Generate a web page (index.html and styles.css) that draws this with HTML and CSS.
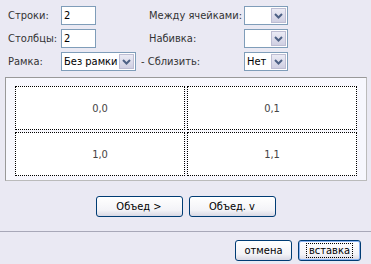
FILE: index.html
```html
<!DOCTYPE html>
<html lang="ru">
<head>
  <meta charset="UTF-8">
  <title>Вставка таблицы</title>
  <link rel="stylesheet" href="styles.css">
</head>
<body>
  <div class="dialog">
    <!-- параметры таблицы -->
    <div class="options">
      <div class="row">
        <span class="label">Строки:</span>
        <input class="num" type="text" value="2">
        <span class="label-right">Между ячейками:</span>
        <div class="combo small">
          <span class="combo-text"></span>
          <span class="combo-btn"><svg width="9" height="6" viewBox="0 0 9 6"><path d="M1 1 L4.5 4.5 L8 1" fill="none" stroke="#4d6185" stroke-width="2"/></svg></span>
        </div>
      </div>
      <div class="row">
        <span class="label">Столбцы:</span>
        <input class="num" type="text" value="2">
        <span class="label-right">Набивка:</span>
        <div class="combo small">
          <span class="combo-text"></span>
          <span class="combo-btn"><svg width="9" height="6" viewBox="0 0 9 6"><path d="M1 1 L4.5 4.5 L8 1" fill="none" stroke="#4d6185" stroke-width="2"/></svg></span>
        </div>
      </div>
      <div class="row">
        <span class="label">Рамка:</span>
        <div class="combo wide">
          <span class="combo-text">Без рамки</span>
          <span class="combo-btn"><svg width="9" height="6" viewBox="0 0 9 6"><path d="M1 1 L4.5 4.5 L8 1" fill="none" stroke="#4d6185" stroke-width="2"/></svg></span>
        </div>
        <span class="label-join">- Сблизить:</span>
        <div class="combo small">
          <span class="combo-text">Нет</span>
          <span class="combo-btn"><svg width="9" height="6" viewBox="0 0 9 6"><path d="M1 1 L4.5 4.5 L8 1" fill="none" stroke="#4d6185" stroke-width="2"/></svg></span>
        </div>
      </div>
    </div>

    <!-- предпросмотр -->
    <div class="preview">
      <table class="grid">
        <tr><td>0,0</td><td>0,1</td></tr>
        <tr><td>1,0</td><td>1,1</td></tr>
      </table>
    </div>

    <div class="merge">
      <button class="btn merge-btn">Объед &gt;</button>
      <button class="btn merge-btn">Объед. v</button>
    </div>

    <div class="footer">
      <button class="btn">отмена</button>
      <button class="btn default"><span class="focus">вставка</span></button>
    </div>
  </div>
</body>
</html>
```

FILE: styles.css
```css
/* общий фон диалога */
body {
  margin: 0;
  background-color: #eae9f3;
  font-family: 'DejaVu Sans Condensed', 'DejaVu Sans', sans-serif;
  font-size: 11px;
  color: #333;
}

.dialog {
  width: 371px;
  height: 264px;
  overflow: hidden;
}

.options {
  padding: 6px 0 0 8px;
}

.row {
  display: flex;
  align-items: center;
  height: 19px;
  margin-bottom: 4px;
  white-space: nowrap;
}

.label {
  width: 53px;
}

.label-right {
  width: 95px;
  margin-left: 53px;
}

.label-join {
  width: 103px;
  margin-left: 5px;
}

.num {
  width: 35px;
  height: 19px;
  box-sizing: border-box;
  border: 1px solid #7f9db9;
  padding: 0 2px;
  font-family: 'DejaVu Sans Condensed', 'DejaVu Sans', sans-serif;
  font-size: 11px;
  color: #000;
  margin: 0;
}

.combo {
  display: flex;
  height: 19px;
  box-sizing: border-box;
  border: 1px solid #7f9db9;
  background-color: #fff;
  color: #000;
}

.combo.small {
  width: 44px;
}

.combo.wide {
  width: 75px;
}

.combo-text {
  flex: 1;
  padding-left: 2px;
  line-height: 17px;
  overflow: hidden;
}

.combo-btn {
  width: 15px;
  margin: 1px;
  display: flex;
  align-items: center;
  justify-content: center;
  background: linear-gradient(#ebebf5, #cfcfe2);
  border: 1px solid #bdbdd3;
  box-sizing: border-box;
}

/* рамка предпросмотра */
.preview {
  margin: 6px 4px 0 5px;
  height: 104px;
  box-sizing: border-box;
  border: 1px solid #999;
  border-right-color: #bbb;
  border-bottom-color: #bbb;
  background-color: #f7f7fd;
  padding: 6px 7px;
}

.grid {
  width: 100%;
  border-spacing: 2px;
}

.grid td {
  height: 40px;
  border: 1px dotted #000;
  background-color: #fff;
  text-align: center;
  color: #444;
}

.merge {
  display: flex;
  justify-content: center;
  gap: 6px;
  padding-top: 15px;
  height: 35px;
  border-bottom: 1px solid #a8a8b8;
}

.btn {
  height: 21px;
  border: 1px solid #003c74;
  border-radius: 3px;
  background: linear-gradient(#ffffff, #f3f3f7 70%, #d8d8e4);
  font-family: 'DejaVu Sans Condensed', 'DejaVu Sans', sans-serif;
  font-size: 11px;
  color: #000;
  padding: 0;
}

.merge-btn {
  width: 87px;
}

.footer {
  display: flex;
  justify-content: flex-end;
  gap: 6px;
  padding: 8px 10px 0 0;
}

.footer .btn {
  width: 57px;
}

.footer .btn.default {
  width: 63px;
  box-shadow: inset 0 0 0 1px #8cb4f2;
}

.focus {
  border: 1px dotted #000;
  padding: 0 2px;
}
```
